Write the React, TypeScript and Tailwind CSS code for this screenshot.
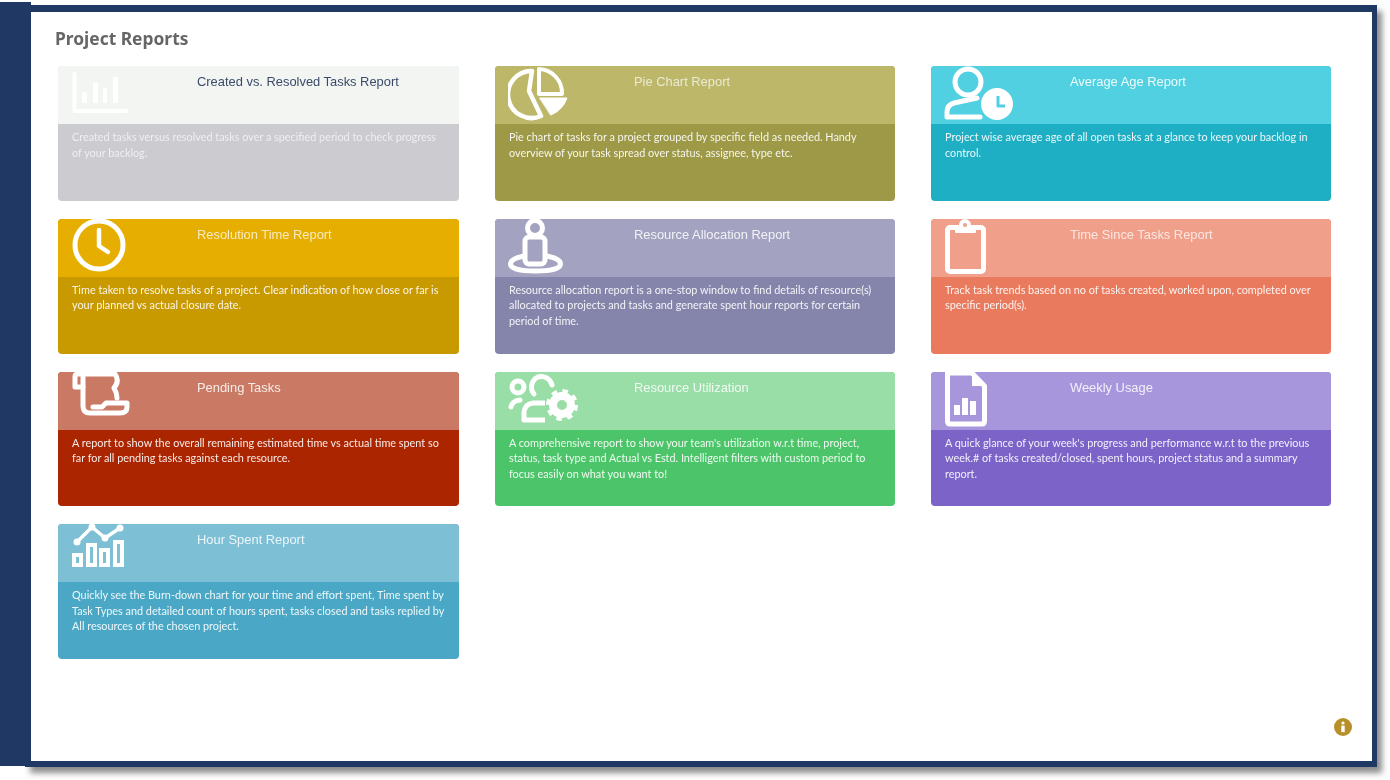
import React from "react";

const S = (p: React.SVGProps<SVGSVGElement> & { children: React.ReactNode }) => (
  <svg viewBox="0 0 72 60" width={72} height={60} fill="none" stroke="#fff" strokeWidth={4.5} strokeLinecap="round" strokeLinejoin="round" className="block" {...p} />
);

const ChartIcon = () => (
  <S>
    <path d="M3.5 8V45H55" strokeWidth={4} />
    <g fill="#fff" stroke="none">
      <rect x="11" y="26" width="5" height="11" />
      <rect x="22" y="17" width="5" height="20" />
      <rect x="32" y="22" width="4" height="15" />
      <rect x="42" y="11" width="5" height="26" />
    </g>
  </S>
);
const PieIcon = () => (
  <S>
    <path d="M24 5A23.5 23.5 0 1 0 33 50L21 25Z" strokeWidth={4.5} />
    <path d="M31 3A24 24 0 0 1 54 28H31Z" strokeWidth={4} />
    <path d="M32 32H59Q55 44 43 49Z" fill="#fff" strokeWidth={1} />
  </S>
);
const AgeIcon = ({ c }: { c: string }) => (
  <S>
    <circle cx="24" cy="16" r="13" strokeWidth={5} />
    <path d="M33 32L10 37Q3 39 3 46V51H36" strokeWidth={5} />
    <circle cx="53" cy="38" r="16" fill="#fff" stroke="none" />
    <path d="M54 30V40H61" stroke={c} strokeWidth={3} strokeLinecap="butt" />
  </S>
);
const ClockIcon = () => (
  <S>
    <circle cx="28" cy="26" r="24" strokeWidth={5} />
    <path d="M28 11V27L37 33" strokeWidth={4.5} />
  </S>
);
const PersonIcon = () => (
  <S strokeWidth={5}>
    <circle cx="27" cy="9" r="7.5" />
    <rect x="17" y="18" width="20" height="27" rx="4" />
    <path d="M16 37C6 39 2.5 42 2.5 45C2.5 50 14 52 27.5 52C41 52 52.5 50 52.5 45C52.5 42 49 39 39 37" />
  </S>
);
const ClipIcon = ({ c }: { c: string }) => (
  <S>
    <rect x="3.5" y="8.5" width="36" height="44" rx="2.5" strokeWidth={5} />
    <path d="M12 8V13H31V8H26V6A5 5 0 0 0 16 6V8Z" fill="#fff" strokeWidth={2} />
    <circle cx="21" cy="6" r="2" fill={c} stroke="none" />
  </S>
);
const ScrollIcon = () => (
  <S strokeWidth={5}>
    <path d="M12 15H4V5Q4 2 7 2H44Q49 9 43 16Q46 21 46 26" />
    <path d="M12 4V34Q12 41 19 41H49Q56 41 56 35V31H35L31 35H22" />
  </S>
);
const TeamGearIcon = () => (
  <S strokeWidth={5}>
    <circle cx="10" cy="15" r="6" />
    <path d="M3 35Q4 29 12 28" />
    <path d="M30 5A11 11 0 0 1 44 13M30 5A11 11 0 0 0 26 22" />
    <path d="M37 31H25Q17 32 16 40V48H37" strokeLinecap="butt" />
    <circle cx="54" cy="33" r="9" strokeWidth={8} />
    <circle cx="54" cy="33" r="14" strokeWidth={4} strokeDasharray="5.5 5.5" strokeLinecap="butt" />
  </S>
);
const DocIcon = () => (
  <S strokeWidth={5}>
    <path d="M3.5 1V49Q3.5 52 6 52H38Q40.5 52 40.5 49V14L28 1Z" />
    <path d="M28 1L41 14H28Z" fill="#fff" stroke="none" />
    <g fill="#fff" stroke="none">
      <rect x="10" y="33" width="6" height="10" />
      <rect x="18" y="26" width="6" height="17" />
      <rect x="26" y="29" width="6" height="14" />
    </g>
  </S>
);
const BurnIcon = () => (
  <S>
    <path d="M6 18L21 3L34 14L49 4" strokeWidth={3.5} />
    <g fill="#fff" stroke="none">
      <circle cx="6" cy="18" r="3.5" />
      <circle cx="21" cy="3" r="3.5" />
      <circle cx="34" cy="14" r="3.5" />
      <circle cx="49" cy="4" r="3.5" />
    </g>
    <g strokeWidth={4} strokeLinecap="butt" strokeLinejoin="miter">
      <rect x="3" y="31" width="7" height="10" />
      <rect x="17" y="21" width="7" height="20" />
      <rect x="30" y="26" width="7" height="15" />
      <rect x="44" y="18" width="7" height="23" />
    </g>
  </S>
);

const cards = [
  { t: "Created vs. Resolved Tasks Report", d: "Created tasks versus resolved tasks over a specified period to check progress of your backlog.", h: "bg-[#f3f5f3]", b: "bg-[#cbcbd0]", tc: "text-[#3a4a68]", dc: "text-white/70", i: <ChartIcon /> },
  { t: "Pie Chart Report", d: "Pie chart of tasks for a project grouped by specific field as needed. Handy overview of your task spread over status, assignee, type etc.", h: "bg-[#bcb769]", b: "bg-[#9e9946]", tc: "text-white/70", dc: "text-white/90", i: <PieIcon /> },
  { t: "Average Age Report", d: "Project wise average age of all open tasks at a glance to keep your backlog in control.", h: "bg-[#50d0e0]", b: "bg-[#1fafc4]", tc: "text-white/90", dc: "text-white/90", i: <AgeIcon c="#50d0e0" /> },
  { t: "Resolution Time Report", d: "Time taken to resolve tasks of a project. Clear indication of how close or far is your planned vs actual closure date.", h: "bg-[#e5ae00]", b: "bg-[#c99900]", tc: "text-white/75", dc: "text-white/90", i: <ClockIcon /> },
  { t: "Resource Allocation Report", d: "Resource allocation report is a one-stop window to find details of resource(s) allocated to projects and tasks and generate spent hour reports for certain period of time.", h: "bg-[#a3a3c1]", b: "bg-[#8584ab]", tc: "text-white/85", dc: "text-white/90", i: <PersonIcon /> },
  { t: "Time Since Tasks Report", d: "Track task trends based on no of tasks created, worked upon, completed over specific period(s).", h: "bg-[#f09f8b]", b: "bg-[#ea7a5d]", tc: "text-white/75", dc: "text-white/90", i: <ClipIcon c="#f09f8b" /> },
  { t: "Pending Tasks", d: "A report to show the overall remaining estimated time vs actual time spent so far for all pending tasks against each resource.", h: "bg-[#ca7a64]", b: "bg-[#ab2500]", tc: "text-white/85", dc: "text-white/90", i: <ScrollIcon /> },
  { t: "Resource Utilization", d: "A comprehensive report to show your team's utilization w.r.t time, project, status, task type and Actual vs Estd. Intelligent filters with custom period to focus easily on what you want to!", h: "bg-[#98dea6]", b: "bg-[#4cc56a]", tc: "text-white/85", dc: "text-white/90", i: <TeamGearIcon /> },
  { t: "Weekly Usage", d: "A quick glance of your week's progress and performance w.r.t to the previous week.# of tasks created/closed, spent hours, project status and a summary report.", h: "bg-[#a896dc]", b: "bg-[#7b63c8]", tc: "text-white/85", dc: "text-white/90", i: <DocIcon /> },
  { t: "Hour Spent Report", d: "Quickly see the Burn-down chart for your time and effort spent, Time spent by Task Types and detailed count of hours spent, tasks closed and tasks replied by All resources of the chosen project.", h: "bg-[#7dbfd5]", b: "bg-[#4aa8c6]", tc: "text-white/85", dc: "text-white/90", i: <BurnIcon /> },
];

export default function App() {
  return (
    <div className="relative flex h-[780px] w-[1390px] overflow-hidden bg-white pt-[2px] font-['Lato',sans-serif] blur-[0.35px]">
      <div className="relative z-10 h-[764px] w-[31px] shrink-0 bg-[#1f3864]" />
      <div className="relative -ml-[6px] mt-[3px] h-[762px] w-[1352px] border-b-[6px] border-l-[5px] border-r-[5px] border-t-[7px] border-[#1f3864] bg-white shadow-[5px_6px_6px_rgba(0,0,0,0.45)]">
        <h1 className="pl-[25px] pt-[14px] font-['Noto_Sans',sans-serif] text-[17.4px] font-bold leading-[24px] text-[#666666]">Project Reports</h1>
        <div className="ml-[28px] mt-[16px] grid grid-cols-[401px_400px_400px] auto-rows-[134.8px] gap-x-[36px] gap-y-[18px]">
          {cards.map((c) => (
            <div key={c.t} className={`flex flex-col rounded-[4px] ${c.b}`}>
              <div className={`flex h-[58px] shrink-0 rounded-t-[4px] pl-[13px] ${c.h}`}>
                <div className="h-[60px] w-[126px] shrink-0">{c.i}</div>
                <div className={`pt-[8px] font-['Liberation_Sans',sans-serif] text-[12.9px] leading-[16px] ${c.tc}`}>{c.t}</div>
              </div>
              <p className={`px-[14px] pt-[5px] text-[10.85px] leading-[15.5px] ${c.dc}`}>{c.d}</p>
            </div>
          ))}
        </div>
        <svg viewBox="0 0 18 18" width={18} height={18} className="absolute bottom-[25px] right-[20px]">
          <circle cx="9" cy="9" r="9" fill="#b8902a" />
          <circle cx="9" cy="5" r="1.6" fill="#fff" />
          <rect x="7.3" y="7.6" width="3.4" height="6.6" fill="#fff" />
        </svg>
      </div>
    </div>
  );
}
